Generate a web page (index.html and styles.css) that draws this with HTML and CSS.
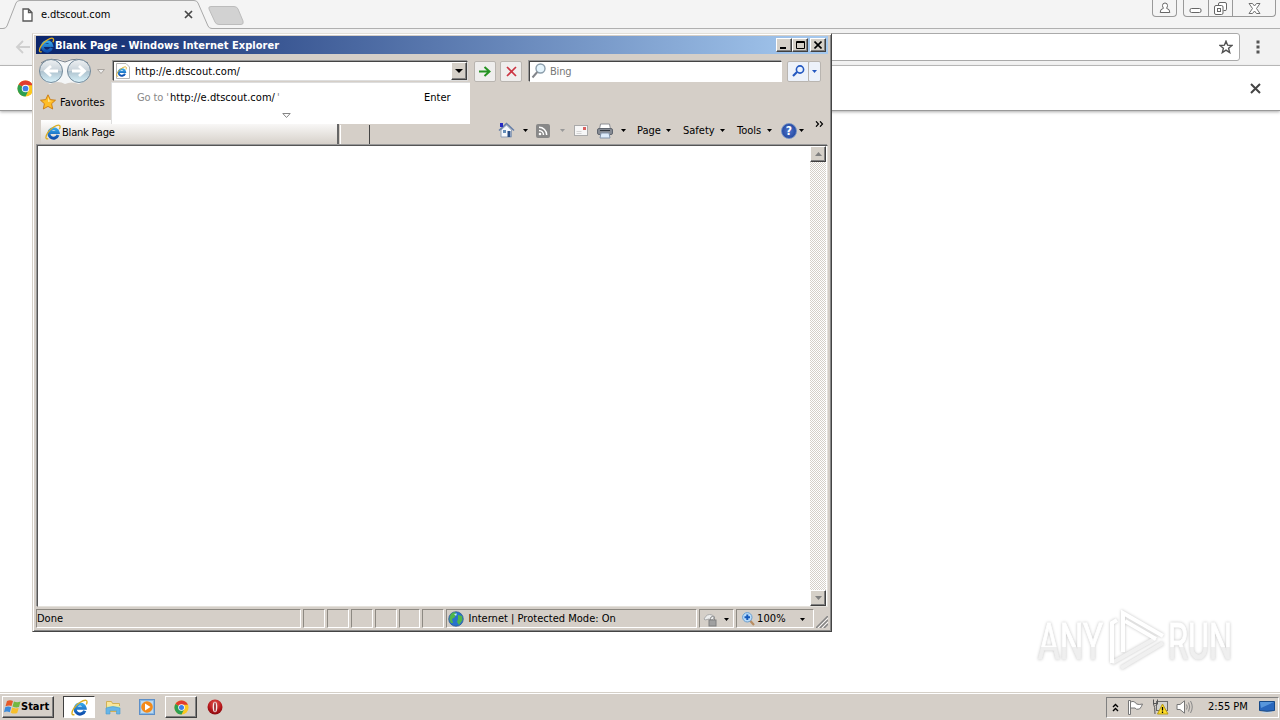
FILE: index.html
```html
<!DOCTYPE html>
<html lang="en">
<head>
<meta charset="utf-8">
<title>Desktop</title>
<link rel="stylesheet" href="styles.css">
</head>
<body>
<svg class="defs" width="0" height="0">
  <defs>
    <linearGradient id="ieBlue" x1="0" y1="0" x2="0" y2="1"><stop offset="0" stop-color="#35a5e8"/><stop offset="1" stop-color="#0f4fae"/></linearGradient>
    <linearGradient id="orb" x1="0" y1="0" x2="0" y2="1"><stop offset="0" stop-color="#eef1f3"/><stop offset=".48" stop-color="#c9d3da"/><stop offset=".52" stop-color="#afc3cf"/><stop offset="1" stop-color="#d8f2fb"/></linearGradient>
    <radialGradient id="redBall" cx=".5" cy=".3" r=".8"><stop offset="0" stop-color="#e8584f"/><stop offset=".6" stop-color="#b01318"/><stop offset="1" stop-color="#74060a"/></radialGradient>
    <symbol id="ie" viewBox="0 0 16 16">
      <path d="M13 11A4.700 4.700 0 1 1 13.200 8.600H5" fill="none" stroke="url(#ieBlue)" stroke-width="3"/>
      <path d="M3.200 14.600C.2 15.800.2 12.400 2.800 8.600 6 4.200 11.500.7 14.200 1.300 15.700 1.800 15 4 14.400 5.200" fill="none" stroke="#dcae22" stroke-width="1.300"/>
    </symbol>
    <symbol id="chrome" viewBox="0 0 16 16">
      <circle cx="8" cy="8" r="7.500" fill="#fbc81f"/>
      <path d="M8 8 1.500 4.250A7.500 7.500 0 0 1 14.500 4.250L14.600 5H8z" fill="#e13c2f"/>
      <path d="M8 8 1.500 4.250A7.500 7.500 0 0 0 8 15.500L11 9.500z" fill="#2d9f51"/>
      <circle cx="8" cy="8" r="3.500" fill="#fff"/><circle cx="8" cy="8" r="2.700" fill="#3f7fe8"/>
    </symbol>
    <symbol id="down" viewBox="0 0 6 3" preserveAspectRatio="none"><path d="M0 0H6L3 3z" fill="currentColor"/></symbol>
  </defs>
</svg>

<div class="desktop">
  <div class="chrome">
    <div class="chrome-tabs">
      <svg class="tab-shape" width="250" height="30" viewBox="0 0 250 30">
        <path d="M0 28.500H3Q6 28.500 7 26L16 3Q17 .5 20 .5H194Q197 .5 198 3L208 26Q209 28.500 212 28.500H250V30H0z" fill="#f2f2f2"/>
        <path d="M0 28.500H3Q6 28.500 7 26L16 3Q17 .5 20 .5H194Q197 .5 198 3L208 26Q209 28.500 212 28.500H250" fill="none" stroke="#a9a9a9"/>
        <path d="M211 6.500H234Q237 6.500 238 9L243 21Q244 24.500 241 24.500H219Q216 24.500 215 22L209 9Q208 6.500 211 6.500z" fill="#d2d2d2" stroke="#bcbcbc"/>
      </svg>
      <div class="tab-label">
        <svg width="11" height="14" viewBox="0 0 11 14"><path d="M1 1H6.500L10 4.500V13H1zM6.500 1V4.500H10" fill="#fff" stroke="#585858" stroke-width="1.300"/></svg>
        <span class="tab-title">e.dtscout.com</span>
        <svg class="tab-x" width="9" height="9" viewBox="0 0 9 9"><path d="M1 1 8 8M8 1 1 8" stroke="#484848" stroke-width="1.700"/></svg>
      </div>
      <div class="chrome-user"><svg width="12" height="12" viewBox="0 0 12 12"><path d="M3.500 3.500a2.500 2.500 0 0 1 5 0Q8.500 5 7.500 6.300 11 7 10.800 10.500H1.200Q1 7 4.500 6.300 3.500 5 3.500 3.500z" fill="#fff" stroke="#666"/></svg></div>
      <div class="chrome-controls">
        <span class="cc"><svg width="13" height="6"><rect x="1" y=".5" width="11" height="4" rx="1.500" fill="#fff" stroke="#666"/></svg></span>
        <span class="cc"><svg width="13" height="13"><path d="M4.500 3.500V2Q4.500.5 6 .5H11Q12.500.5 12.500 2V7.500Q12.500 8.500 11 8.500H9.500" fill="#fff" stroke="#666"/><rect x=".5" y="3.500" width="8.500" height="9" rx="1.500" fill="#fff" stroke="#666"/><rect x="3.500" y="6.500" width="3" height="3" fill="none" stroke="#666"/></svg></span>
        <span class="cc"><svg width="13" height="11" viewBox="0 0 13 11"><path d="M1 .5H4.500L6.500 3 8.500.5H12L8.500 5.500 12 10.500H8.500L6.500 8 4.500 10.500H1L4.500 5.500z" fill="#fff" stroke="#707070"/></svg></span>
      </div>
    </div>
    <div class="chrome-toolbar">
      <svg width="15" height="14" viewBox="0 0 15 14"><path d="M15 7H2M8 1 2 7 8 13" fill="none" stroke="#d0d0d0" stroke-width="1.900"/></svg>
      <div class="omnibox"><svg width="14" height="14" viewBox="0 0 14 14"><path d="M7 1.200 8.600 5.200 13 5.500 9.600 8.300 10.700 12.600 7 10.200 3.300 12.600 4.400 8.300 1 5.500 5.400 5.200z" fill="none" stroke="#505050" stroke-width="1.400"/></svg></div>
      <svg width="4" height="14"><path d="M.5.5h3v3h-3zM.5 5.500h3v3h-3zM.5 10.500h3v3h-3z" fill="#555"/></svg>
    </div>
    <div class="infobar">
      <svg width="17" height="17"><use href="#chrome"/></svg>
      <svg width="11" height="11" viewBox="0 0 11 11"><path d="M1 1 10 10M10 1 1 10" stroke="#454545" stroke-width="2"/></svg>
    </div>
  </div>

  <svg class="watermark" width="230" height="80" viewBox="0 0 230 80">
    <defs><linearGradient id="wm" x1="0" y1="0" x2="0" y2="1"><stop offset=".58" stop-color="#fff"/><stop offset=".58" stop-color="#efefef"/></linearGradient></defs>
    <g class="wm-glow">
      <text class="wm-text" x="8" y="57" textLength="65" lengthAdjust="spacingAndGlyphs">ANY</text>
      <text class="wm-text" x="138" y="57" textLength="64" lengthAdjust="spacingAndGlyphs">RUN</text>
      <g fill="none" stroke-width="4">
        <path d="M82 61 126 36M91 66 133 41" stroke="#f0f0f0"/>
        <path d="M87 18 82 21V61M93 50V11L133 34M95 19 126 37" stroke="#fff"/>
      </g>
    </g>
  </svg>

  <div class="ie-window">
    <div class="title-bar">
      <svg width="17" height="16"><use href="#ie"/></svg>
      <span class="title-text">Blank Page - Windows Internet Explorer</span>
      <span class="win-btn"><svg width="8" height="8"><path d="M0 6h6v2H0z"/></svg></span>
      <span class="win-btn"><svg width="9" height="8"><path d="M.5.5H8.500V7.500H.5zM0 1.500H9" fill="none" stroke="#000"/></svg></span>
      <span class="win-btn close"><svg width="8" height="8"><path d="M.5.5 7.500 7.500M7.500.5.5 7.500" stroke="#000" stroke-width="1.600"/></svg></span>
    </div>

    <div class="nav-row">
      <svg class="orbs" width="69" height="27" viewBox="0 0 69 27">
        <path d="M14 1Q24 0 29 4 34 0 43 1A13 13 0 0 1 43 26Q35 23 29 26 22 22 14 26A13 13 0 0 1 14 1z" fill="#f4f6f7"/>
        <path d="M5 5Q14-2 29 4 41-2 52 5" fill="none" stroke="#77808a"/>
        <circle cx="15" cy="13" r="11.500" fill="url(#orb)" stroke="#73899a"/><circle cx="43" cy="13" r="11.500" fill="url(#orb)" stroke="#73899a"/>
        <path d="M22 13H10M15 8 9.500 13 15 18" fill="none" stroke="#fff" stroke-width="2.800"/>
        <path d="M36 13H48M43 8 48.500 13 43 18" fill="none" stroke="#fff" stroke-width="2.800"/>
        <path d="M61.500 11.500h7l-3.500 4z" fill="#eee" stroke="#aaa5a0"/>
      </svg>
      <div class="address">
        <svg width="16" height="16" viewBox="0 0 16 16"><path d="M1.500.5H11L14.500 4V15.500H1.500z" fill="#fff" stroke="#b5b5b5"/><use href="#ie" x="1" y="3" width="11" height="11"/></svg>
        <span class="url">http://e.dtscout.com/</span>
        <span class="drop-btn"><svg width="8" height="4"><use href="#down"/></svg></span>
      </div>
      <span class="soft-btn go"><svg width="12" height="11" viewBox="0 0 12 11"><path d="M0 5.500H10M5.500 1 10.500 5.500 5.500 10" fill="none" stroke="#259322" stroke-width="2"/></svg></span>
      <span class="soft-btn stop"><svg width="11" height="11" viewBox="0 0 11 11"><path d="M1 1 10 10M10 1 1 10" stroke="#cc3542" stroke-width="1.700"/></svg></span>
      <div class="search">
        <svg width="16" height="16" viewBox="0 0 16 16"><circle cx="9.500" cy="5.500" r="4.500" fill="#e6f5fd" stroke="#8b9dab" stroke-width="1.400"/><path d="M6.300 9 1.500 14.500" stroke="#82858a" stroke-width="2"/></svg>
        <span class="hint">Bing</span>
      </div>
      <span class="soft-btn find"><svg width="13" height="12" viewBox="0 0 13 12"><circle cx="8" cy="4.500" r="3.600" fill="#eaf3ff" stroke="#2458c0" stroke-width="1.600"/><path d="M5 7 1 11" stroke="#2458c0" stroke-width="2.200"/></svg></span>
      <span class="soft-btn find-more"><svg width="5" height="3"><use href="#down"/></svg></span>
    </div>

    <div class="fav-row">
      <svg width="16" height="16" viewBox="0 0 16 16"><path d="M8 .8 10.300 5.600 15.500 6.200 11.600 9.700 12.700 15 8 12.400 3.300 15 4.400 9.700.5 6.200 5.700 5.600z" fill="#ffbd24" stroke="#c87912" stroke-width=".9"/><path d="M8 3 9.500 6.500 12 7 8 8z" fill="#ffe894"/></svg>
      <span class="fav">Favorites</span>
    </div>

    <div class="tab-row">
      <div class="ie-tab"><svg width="16" height="16"><use href="#ie"/></svg><span>Blank Page</span></div>
      <div class="new-tab"></div>
      <div class="commands">
        <svg class="i-home" width="17" height="17" viewBox="0 0 17 17"><path d="M3 8V15H13.500V8L8.500 3z" fill="#f5f8fc" stroke="#91a0b5"/><path d="M1 8.500 8.500 1.500 16 8.500" fill="none" stroke="#677fa8" stroke-width="1.500"/><path d="M2 1h3v4H2z" fill="#252ac3"/><path d="M9.500 9h3v6h-3z" fill="#2a4f86"/><path d="M5 8h3v3H5z" fill="#648db8"/></svg>
        <svg class="arr a-home" width="5" height="3"><use href="#down"/></svg>
        <svg class="i-rss" width="14" height="14" viewBox="0 0 14 14"><rect width="14" height="14" rx="2" fill="#888"/><circle cx="4" cy="10" r="1.300" fill="#fff"/><path d="M3 6.500a4.500 4.500 0 0 1 4.500 4.500M3 3.300A7.700 7.700 0 0 1 10.700 11" fill="none" stroke="#fff" stroke-width="1.500"/></svg>
        <svg class="arr a-rss" width="5" height="3"><use href="#down"/></svg>
        <svg class="i-mail" width="14" height="11" viewBox="0 0 14 11"><rect x=".5" y=".5" width="13" height="10" fill="#f7f7f7" stroke="#aaa"/><path d="M9 2h3v3H9z" fill="#d96260"/><path d="M2.500 6.500h5M2.500 8.500h5" stroke="#d5d5d5"/></svg>
        <svg class="i-print" width="16" height="16" viewBox="0 0 16 16"><path d="M3.500 1h9l1 5h-11z" fill="#fff" stroke="#8b8d93"/><rect x=".5" y="5.500" width="15" height="6" rx="1.500" fill="#858a93" stroke="#60666f"/><path d="M3 7.500h10" stroke="#303740"/><path d="M4 10h8l1 5H3z" fill="#dceafa" stroke="#8394aa"/></svg>
        <svg class="arr a-print" width="5" height="3"><use href="#down"/></svg>
        <span class="m-page">Page</span><svg class="arr a-page" width="5" height="3"><use href="#down"/></svg>
        <span class="m-safety">Safety</span><svg class="arr a-safety" width="5" height="3"><use href="#down"/></svg>
        <span class="m-tools">Tools</span><svg class="arr a-tools" width="5" height="3"><use href="#down"/></svg>
        <span class="i-help">?</span>
        <svg class="arr a-help" width="5" height="3"><use href="#down"/></svg>
        <svg class="i-more" width="9" height="6" viewBox="0 0 9 6"><path d="M1 .3 3.500 3 1 5.700M5 .3 7.500 3 5 5.700" fill="none" stroke="#000" stroke-width="1.200"/></svg>
      </div>
    </div>

    <div class="page-area">
      <div class="page"></div>
      <div class="scrollbar">
        <span class="sb-btn"><svg width="7" height="4" viewBox="0 0 7 4"><path d="M0 4 3.500 0 7 4z" fill="#808080"/></svg></span>
        <span class="sb-btn"><svg width="7" height="4" viewBox="0 0 7 4"><path d="M0 0 3.500 4 7 0z" fill="#808080"/></svg></span>
      </div>
    </div>

    <div class="status">
      <span class="cell done">Done</span>
      <span class="cell"></span><span class="cell"></span><span class="cell"></span><span class="cell"></span><span class="cell"></span><span class="cell"></span>
      <span class="cell zone">
        <svg width="16" height="16" viewBox="0 0 16 16"><circle cx="8" cy="8" r="7.300" fill="#2872cc" stroke="#2c568c" stroke-width=".7"/><path d="M3 3Q6 0 8 2L7 6 4 8 5 12 3 12Q0 8 3 3zM10 4 14 5 14.500 9 11 14 9 11 10 8z" fill="#51b64a"/><path d="M6 3 9 2.500 8 5z" fill="#bceaff"/></svg>
        <span class="zone-text">Internet | Protected Mode: On</span>
      </span>
      <span class="cell lock"><svg width="15" height="15" viewBox="0 0 15 15"><path d="M1 7Q4 1 9 3L12 5 9 8 6 7 2 8z" fill="#eee" stroke="#aaa"/><path d="M7.500 8V6.500a2 2 0 0 1 4 0V8" fill="none" stroke="#888"/><rect x="6" y="8" width="7" height="6" fill="#a0a0a0" stroke="#808080"/></svg><svg class="arr" width="5" height="3"><use href="#down"/></svg></span>
      <span class="cell zoom"><svg width="13" height="14" viewBox="0 0 13 14"><path d="M7.500 8 12 13" stroke="#b88d62" stroke-width="2.200"/><circle cx="5.300" cy="5.300" r="4.700" fill="#b9dcfa" stroke="#6c9fd0"/><path d="M5.300 2.500V8M2.500 5.300H8" stroke="#1459bb" stroke-width="2"/></svg><span class="pct">100%</span><svg class="arr" width="5" height="3"><use href="#down"/></svg></span>
      <svg class="grip" width="12" height="12"><path d="M0 12 12 0M4 12 12 4M8 12 12 8" stroke="#858585" stroke-width="1.500"/><path d="M1.500 12.500 12.500 1.500M5.500 12.500 12.500 5.500" stroke="#fff" stroke-width=".8"/></svg>
    </div>

    <div class="suggest">
      <div class="suggest-line"><span class="goto">Go to '</span><span class="s-url">http://e.dtscout.com/</span><span class="goto-end">'</span><span class="enter">Enter</span></div>
      <svg class="expand" width="9" height="6" viewBox="0 0 9 6"><path d="M.8.500H8.200L4.500 4.500z" fill="#fff" stroke="#858585"/></svg>
    </div>
  </div>

  <div class="taskbar">
    <div class="start">
      <svg width="17" height="16" viewBox="0 0 17 16"><path d="M3 2Q6 .5 9 2L7.500 7Q5 6 1.500 7.300z" fill="#e65a28"/><path d="M10 2.500Q13 4 16.500 2.500L15 8Q12 9 8.500 7.500z" fill="#73b841"/><path d="M1.200 8.300Q4 7 7.200 8.200L5.800 13.200Q3 12 0 13.200z" fill="#3c8bdb"/><path d="M8.200 8.600Q11 10 14.700 9L13.200 14Q10 15.300 6.800 13.700z" fill="#f7bf2b"/></svg>
      <span>Start</span>
    </div>
    <div class="task active"><svg width="17" height="17"><use href="#ie"/></svg></div>
    <div class="task"><svg width="16" height="16" viewBox="0 0 16 16"><path d="M1.500 2.500h5l1 2h7v8h-13z" fill="#f9e69a" stroke="#d1b056"/><path d="M2 7H15V11H2z" fill="#d5ebaa"/><path d="M1 9Q8 6 15 9V15H11.500V11.500H5V15H1z" fill="#66b5e8" stroke="#4a9ace" stroke-width=".6"/></svg></div>
    <div class="task"><svg width="16" height="16" viewBox="0 0 16 16"><rect x=".5" y=".5" width="15" height="15" fill="#87b8e4" stroke="#5d8fc8"/><rect x="2" y="2" width="12" height="12" fill="#bdd9f0"/><circle cx="8" cy="8" r="5.800" fill="#f38a19"/><path d="M6 4.500 11.500 8 6 11.500z" fill="#fff"/></svg></div>
    <div class="task raised"><svg width="15" height="15"><use href="#chrome"/></svg></div>
    <div class="task"><svg width="16" height="16" viewBox="0 0 16 16"><circle cx="8" cy="8" r="7.500" fill="url(#redBall)"/><ellipse cx="8" cy="8" rx="2.300" ry="5.300" fill="#f5eaea"/><ellipse cx="8" cy="8" rx=".8" ry="4.700" fill="#8c1014"/></svg></div>
    <div class="tray">
      <svg class="t-chev" width="7" height="9" viewBox="0 0 7 9"><path d="M1 4 3.500 1.500 6 4M1 8 3.500 5.500 6 8" fill="none" stroke="#000" stroke-width="1.400"/></svg>
      <svg class="t-flag" width="17" height="15" viewBox="0 0 17 15"><path d="M1.500.5h2V14.500h-2z" fill="#fff" stroke="#777"/><path d="M3.500 2Q6 .5 8.500 2.500L9.500 4Q12 5 15.500 4 14.500 7 12.500 9 9 10 8 8H3.500z" fill="#fff" stroke="#777"/></svg>
      <svg class="t-net" width="17" height="16" viewBox="0 0 17 16"><rect x="4.500" y="2.500" width="11" height="9" fill="#d3d3cf" stroke="#6b6b6b"/><path d="M1.500.5V5Q3 7 3 15M5.500.5V5L3.500 7M1 4.500h5" fill="none" stroke="#555"/><path d="M10.500 5 16 15H5.500z" fill="#ffdd25" stroke="#b79a16"/><path d="M10.500 8v3.500M10.500 12.500V14" stroke="#000" stroke-width="1.300"/></svg>
      <svg class="t-vol" width="17" height="14" viewBox="0 0 17 14"><path d="M1 4.500H4L8.500.8V13.200L4 9.500H1z" fill="#fff" stroke="#777"/><path d="M10.500 4.500Q12 7 10.500 9.500M12.500 2.500Q15 7 12.500 11.500M14.500 1Q18 7 14.500 13" fill="none" stroke="#888"/></svg>
      <span class="clock">2:55 PM</span>
      <svg class="t-desk" width="16" height="14" viewBox="0 0 16 14"><path d="M.5 1.500H15.500V10.500Q8 12 .5 10.500z" fill="#2967bd" stroke="#164987"/><path d="M1 2H15L2 8z" fill="#5796dc"/><path d="M3 12.500H13" stroke="#c4d4e4"/></svg>
    </div>
  </div>
</div>
</body>
</html>
```
FILE: styles.css
```css
* { box-sizing: border-box; }
body { margin: 0; overflow: hidden; background: #fff; }
svg { display: block; flex: none; }
.defs { position: absolute; }
.desktop {
  position: relative; width: 1280px; height: 720px; overflow: hidden;
  display: flex; flex-direction: column; justify-content: space-between;
  font: 11px/14px "DejaVu Sans Condensed", "DejaVu Sans", sans-serif;
  font-stretch: condensed; color: #000; white-space: nowrap;
}

/* browser in the background */
.chrome-tabs { position: relative; display: flex; height: 29px; background: #f4f4f4; border-bottom: 1px solid #b0b0b0; }
.tab-shape { position: absolute; left: 0; top: 0; }
.tab-label { position: relative; display: flex; align-items: center; width: 250px; height: 29px; padding-left: 22px; }
.tab-title { width: 151px; padding-left: 8px; letter-spacing: -.1px; }
.chrome-user { display: flex; justify-content: center; margin-left: 902px; width: 25px; height: 17px; padding-top: 2px; border: 1px solid #999; border-top: 0; border-radius: 0 0 4px 4px; }
.chrome-controls { display: flex; margin-left: 6px; width: 93px; height: 17px; border: 1px solid #999; border-top: 0; border-radius: 0 0 4px 4px; }
.cc { display: flex; justify-content: center; align-items: flex-start; width: 25px; padding-top: 2px; border-right: 1px solid #999; }
.cc:first-child { padding-top: 8px; }
.cc:last-child { width: 42px; padding-top: 3px; border: 0; }
.chrome-toolbar { display: flex; align-items: center; height: 37px; padding-left: 15px; background: #f2f2f2; border-bottom: 1px solid #b8b8b8; }
.omnibox { display: flex; align-items: center; justify-content: flex-end; width: 1140px; height: 28px; margin: 0 16px 0 70px; padding-right: 6px; background: #fff; border: 1px solid #aaa; border-radius: 3px; }
.infobar { display: flex; align-items: center; justify-content: space-between; height: 45px; padding: 0 19px 0 17px; background: #fff; border-bottom: 1px solid #999; box-shadow: 0 1px 3px #aaa; }

.watermark { position: absolute; left: 1030px; top: 602px; }
.wm-glow { filter: drop-shadow(0 0 1.5px #c4c4c4); }
.wm-text { font: 50px Roboto, sans-serif; fill: url(#wm); stroke: url(#wm); stroke-width: 1px; }

/* foreground window */
.ie-window {
  position: absolute; left: 32px; top: 33px; width: 800px; height: 599px; padding: 2px 3px 2px;
  display: flex; flex-direction: column; background: #d5cfc8;
  border: 1px solid; border-color: #e2dfd8 #444 #444 #d5d0c8; box-shadow: inset 1px 1px #fff, inset -1px -1px #888;
}
.title-bar { display: flex; align-items: center; height: 18px; padding: 0 2px; background: linear-gradient(90deg, #0b256b, #a6caf0); color: #fff; font-weight: bold; }
.title-text { flex: 1; padding-top: 1px; letter-spacing: .04px; }
.win-btn, .drop-btn, .sb-btn {
  display: flex; align-items: center; justify-content: center; flex: none; background: #d5d0c8;
  border: 1px solid; border-color: #fff #404040 #404040 #fff; box-shadow: inset -1px -1px #808080;
}
.win-btn { width: 16px; height: 14px; }
.win-btn.close { margin-left: 2px; }
.nav-row { display: flex; align-items: center; height: 34px; }
.orbs { margin-right: 9px; }
.address { display: flex; align-items: center; width: 355px; height: 20px; padding-left: 1px; background: #fff; border: 1px solid; border-color: #444 #ddd #ddd #444; box-shadow: -1px -1px #999; margin-left: -1px; }
.url { flex: 1; padding: 2px 0 0 4px; letter-spacing: .04px; }
.drop-btn { width: 16px; height: 18px; }
.soft-btn { display: flex; align-items: center; justify-content: center; width: 22px; height: 21px; flex: none; background: #efeeed; border: 1px solid #b9b5b0; border-radius: 2px; }
.go { margin-left: 6px; }
.stop { margin-left: 4px; }
.search { display: flex; align-items: center; width: 253px; height: 21px; margin-left: 7px; padding-left: 1px; background: #fff; border: 1px solid; border-color: #444 #fff #fff #444; box-shadow: -1px -1px #999; }
.hint { padding: 2px 0 0 3px; color: #777; letter-spacing: -.2px; }
.find { margin-left: 5px; background: #edf2fa; border-radius: 2px 0 0 2px; }
.find-more { width: 13px; margin-left: -1px; color: #2458c0; background: #edf2fa; }
.fav-row { display: flex; align-items: center; height: 28px; padding-left: 4px; }
.fav { padding: 2px 0 0 4px; }
.tab-row { display: flex; align-items: flex-end; height: 29px; padding-left: 5px; }
.ie-tab { display: flex; align-items: center; width: 298px; height: 25px; padding: 0 0 1px 4px; background: linear-gradient(#fff, #d5cfc8); border-right: 2px solid #666; }
.ie-tab span { padding: 1px 0 0 1px; letter-spacing: -.2px; }
.new-tab { width: 30px; height: 20px; margin-left: 1px; border-left: 1px solid #fff; border-right: 1px solid #444; }
.commands { display: flex; align-items: center; height: 29px; flex: 1; padding-left: 128px; }
.a-home { margin-left: 8px; }
.i-rss { margin-left: 8px; }
.a-rss { margin-left: 10px; color: #999; }
.i-mail { margin-left: 9px; }
.i-print { margin-left: 9px; }
.a-print { margin-left: 8px; }
.m-page { width: 29px; margin-left: 11px; }
.m-safety { width: 37px; margin-left: 12px; }
.m-tools { width: 30px; margin-left: 12px; }
.i-help { display: flex; align-items: center; justify-content: center; width: 16px; height: 16px; margin-left: 9px; border: 1px solid #718fc4; border-radius: 50%; background: radial-gradient(#5277cc, #153a94); color: #fff; font-weight: bold; font-size: 12px; }
.a-help { margin-left: 2px; }
.i-more { margin: -14px 0 0 11px; }
.page-area { display: flex; height: 462px; padding-right: 1px; background: #fff; border: 1px solid; border-color: #555 #e4e1db #e4e1db #555; box-shadow: -1px -1px #999; margin-left: 1px; }
.page { flex: 1; }
.scrollbar { display: flex; flex-direction: column; justify-content: space-between; width: 16px; background: repeating-conic-gradient(#fff 0 25%, #d5d0c8 0 50%) 0 0 / 2px 2px; }
.sb-btn { height: 16px; }
.status { display: flex; height: 19px; margin-top: 2px; gap: 2px; }
.cell { display: flex; align-items: center; width: 22px; padding-top: 1px; border: 1px solid; border-color: #8d8982 #fff #fff #8d8982; }
.done { width: 265px; }
.zone { width: 251px; padding-left: 1px; }
.zone-text { padding-left: 4px; letter-spacing: .02px; }
.lock { width: 35px; padding-left: 3px; }
.lock .arr { margin-left: 6px; }
.zoom { width: 78px; padding-left: 5px; }
.pct { width: 45px; padding-left: 2px; letter-spacing: .1px; }
.grip { align-self: flex-end; }
.suggest { position: absolute; left: 78px; top: 48px; width: 359px; height: 42px; background: #fff; border-left: 1px solid #ddd; border-top: 1px solid #ddd; }
.suggest-line { display: flex; height: 29px; align-items: center; padding-left: 25px; }
.goto { width: 33px; color: #888; letter-spacing: -.1px; }
.s-url { width: 107px; letter-spacing: .04px; }
.goto-end { width: 147px; color: #888; }
.expand { margin: 1px 0 0 170px; }

/* taskbar */
.taskbar { display: flex; align-items: center; height: 28px; padding: 1px 1px 0 2px; background: #d5cfc8; border-top: 1px solid #d5d0c8; box-shadow: inset 0 1px #fff; }
.start, .task.raised { border: 1px solid; border-color: #fff #404040 #404040 #fff; box-shadow: inset -1px -1px #808080; }
.start { display: flex; align-items: center; width: 52px; height: 22px; padding-left: 1px; font-weight: bold; margin-right: 9px; }
.task { display: flex; align-items: center; justify-content: center; width: 32px; height: 22px; margin-right: 2px; }
.task.active { background: #fff; border: 1px solid; border-color: #404040 #fff #fff #404040; }
.tray { display: flex; align-items: center; width: 173px; height: 21px; margin-left: auto; padding-left: 5px; border: 1px solid; border-color: #808080 #fff #fff #808080; }
.t-flag { margin-left: 8px; }
.t-net { margin-left: 8px; }
.t-vol { margin-left: 7px; }
.clock { width: 51px; margin-left: 15px; }
```
